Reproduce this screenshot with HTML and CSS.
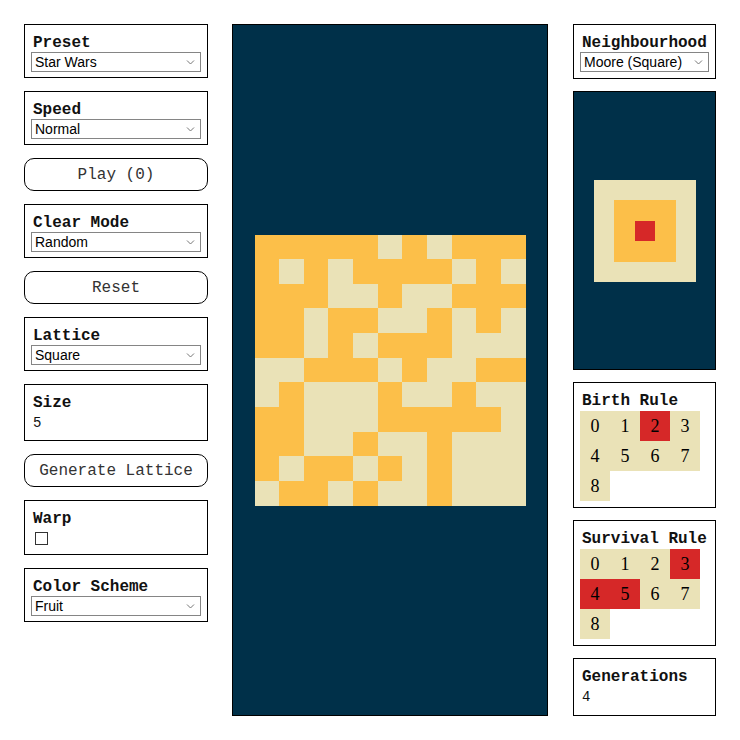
FILE: index.html
```html
<!DOCTYPE html>
<html>
<head>
<meta charset="utf-8">
<link rel="stylesheet" href="styles.css">
</head>
<body>
<div class="app">
  <div class="left">
    <div class="box">
      <div class="label">Preset</div>
      <div class="sel"><select><option>Star Wars</option></select><svg class="chev" width="9" height="5" viewBox="0 0 9 5"><path d="M1 0.5 L4.5 4 L8 0.5" /></svg></div>
    </div>
    <div class="box">
      <div class="label">Speed</div>
      <div class="sel"><select><option>Normal</option></select><svg class="chev" width="9" height="5" viewBox="0 0 9 5"><path d="M1 0.5 L4.5 4 L8 0.5" /></svg></div>
    </div>
    <button class="btn">Play (0)</button>
    <div class="box">
      <div class="label">Clear Mode</div>
      <div class="sel"><select><option>Random</option></select><svg class="chev" width="9" height="5" viewBox="0 0 9 5"><path d="M1 0.5 L4.5 4 L8 0.5" /></svg></div>
    </div>
    <button class="btn">Reset</button>
    <div class="box">
      <div class="label">Lattice</div>
      <div class="sel"><select><option>Square</option></select><svg class="chev" width="9" height="5" viewBox="0 0 9 5"><path d="M1 0.5 L4.5 4 L8 0.5" /></svg></div>
    </div>
    <div class="box">
      <div class="label">Size</div>
      <div class="value">5</div>
    </div>
    <button class="btn">Generate Lattice</button>
    <div class="box">
      <div class="label">Warp</div>
      <input type="checkbox" class="check">
    </div>
    <div class="box">
      <div class="label">Color Scheme</div>
      <div class="sel"><select><option>Fruit</option></select><svg class="chev" width="9" height="5" viewBox="0 0 9 5"><path d="M1 0.5 L4.5 4 L8 0.5" /></svg></div>
    </div>
  </div>

  <div class="center">
    <div class="grid">
      <span class="o"></span><span class="o"></span><span class="o"></span><span class="o"></span><span class="o"></span><span class="b"></span><span class="o"></span><span class="b"></span><span class="o"></span><span class="o"></span><span class="o"></span>
      <span class="o"></span><span class="b"></span><span class="o"></span><span class="b"></span><span class="o"></span><span class="o"></span><span class="o"></span><span class="o"></span><span class="b"></span><span class="o"></span><span class="b"></span>
      <span class="o"></span><span class="o"></span><span class="o"></span><span class="b"></span><span class="b"></span><span class="o"></span><span class="b"></span><span class="b"></span><span class="o"></span><span class="o"></span><span class="o"></span>
      <span class="o"></span><span class="o"></span><span class="b"></span><span class="o"></span><span class="o"></span><span class="b"></span><span class="b"></span><span class="o"></span><span class="b"></span><span class="o"></span><span class="b"></span>
      <span class="o"></span><span class="o"></span><span class="b"></span><span class="o"></span><span class="b"></span><span class="o"></span><span class="o"></span><span class="o"></span><span class="b"></span><span class="b"></span><span class="b"></span>
      <span class="b"></span><span class="b"></span><span class="o"></span><span class="o"></span><span class="o"></span><span class="b"></span><span class="o"></span><span class="b"></span><span class="b"></span><span class="o"></span><span class="o"></span>
      <span class="b"></span><span class="o"></span><span class="b"></span><span class="b"></span><span class="b"></span><span class="o"></span><span class="b"></span><span class="b"></span><span class="o"></span><span class="b"></span><span class="b"></span>
      <span class="o"></span><span class="o"></span><span class="b"></span><span class="b"></span><span class="b"></span><span class="o"></span><span class="o"></span><span class="o"></span><span class="o"></span><span class="o"></span><span class="b"></span>
      <span class="o"></span><span class="o"></span><span class="b"></span><span class="b"></span><span class="o"></span><span class="b"></span><span class="b"></span><span class="o"></span><span class="b"></span><span class="b"></span><span class="b"></span>
      <span class="o"></span><span class="b"></span><span class="o"></span><span class="o"></span><span class="b"></span><span class="o"></span><span class="b"></span><span class="o"></span><span class="b"></span><span class="b"></span><span class="b"></span>
      <span class="b"></span><span class="o"></span><span class="o"></span><span class="b"></span><span class="o"></span><span class="b"></span><span class="b"></span><span class="o"></span><span class="b"></span><span class="b"></span><span class="b"></span>
    </div>
  </div>

  <div class="right">
    <div class="box nbox">
      <div class="label">Neighbourhood</div>
      <div class="sel"><select><option>Moore (Square)</option></select><svg class="chev" width="9" height="5" viewBox="0 0 9 5"><path d="M1 0.5 L4.5 4 L8 0.5" /></svg></div>
    </div>
    <div class="npanel">
      <div class="ring1"><div class="ring2"><div class="core"></div></div></div>
    </div>
    <div class="box rulebox">
      <div class="label">Birth Rule</div>
      <div class="rules">
        <span>0</span><span>1</span><span class="on">2</span><span>3</span>
        <span>4</span><span>5</span><span>6</span><span>7</span>
        <span>8</span>
      </div>
    </div>
    <div class="box rulebox">
      <div class="label">Survival Rule</div>
      <div class="rules">
        <span>0</span><span>1</span><span>2</span><span class="on">3</span>
        <span class="on">4</span><span class="on">5</span><span>6</span><span>7</span>
        <span>8</span>
      </div>
    </div>
    <div class="box genbox">
      <div class="label">Generations</div>
      <div class="value">4</div>
    </div>
  </div>
</div>
</body>
</html>
```

FILE: styles.css
```css
html, body {
  margin: 0;
  padding: 0;
  background: #ffffff;
}

.app {
  display: flex;
  align-items: stretch;
  padding: 24px;
  font-family: "Liberation Mono", "Courier New", monospace;
  color: #111;
}

.left {
  width: 184px;
  display: flex;
  flex-direction: column;
  gap: 13px;
  flex-shrink: 0;
}

.center {
  width: 316px;
  margin-left: 24px;
  box-sizing: border-box;
  background: #003049;
  border: 1px solid #000;
  display: flex;
  align-items: center;
  justify-content: center;
  flex-shrink: 0;
}

.right {
  width: 143px;
  margin-left: 25px;
  display: flex;
  flex-direction: column;
  gap: 12px;
  flex-shrink: 0;
}

.box {
  box-sizing: border-box;
  border: 1px solid #000;
  padding: 9px 6px 5px 6px;
  background: #fff;
}

.label {
  font-family: "Liberation Mono", "Courier New", monospace;
  font-weight: bold;
  font-size: 16px;
  line-height: 18px;
  height: 18px;
  padding-left: 2px;
  white-space: nowrap;
}

.sel {
  position: relative;
  height: 20px;
}

.sel select {
  appearance: none;
  -webkit-appearance: none;
  display: block;
  width: 100%;
  height: 20px;
  box-sizing: border-box;
  border: 1px solid #858585;
  border-radius: 0;
  background: #fff;
  color: #000;
  font-family: "Liberation Sans", Arial, sans-serif;
  font-size: 14px;
  padding: 1px 0 0 3px;
  margin: 0;
  line-height: 17px;
}

.chev {
  position: absolute;
  right: 6px;
  top: 8px;
  pointer-events: none;
}

.chev path {
  fill: none;
  stroke: #777;
  stroke-width: 1;
}

.btn {
  display: block;
  width: 100%;
  height: 33px;
  box-sizing: border-box;
  border: 1px solid #000;
  border-radius: 10px;
  background: #fff;
  color: #333;
  font-family: "Liberation Mono", "Courier New", monospace;
  font-size: 16px;
  padding: 0;
  margin: 0;
}

.value {
  font-family: "Liberation Mono", "Courier New", monospace;
  font-size: 14px;
  height: 23px;
  line-height: 23px;
  padding-left: 2px;
}

.check {
  appearance: none;
  -webkit-appearance: none;
  display: block;
  width: 13px;
  height: 13px;
  box-sizing: border-box;
  border: 1px solid #333;
  border-radius: 0;
  background: #fff;
  margin: 4px 0 4px 4px;
}

.grid {
  width: 271px;
  height: 271px;
  display: grid;
  grid-template-columns: repeat(11, 1fr);
  grid-template-rows: repeat(11, 1fr);
}

.grid .o { background: #fcbf49; }
.grid .b { background: #eae2b7; }

.nbox {
  height: 55px;
}

.npanel {
  height: 279px;
  box-sizing: border-box;
  background: #003049;
  border: 1px solid #000;
  display: flex;
  align-items: center;
  justify-content: center;
}

.ring1 {
  width: 102px;
  height: 102px;
  background: #eae2b7;
  display: flex;
  align-items: center;
  justify-content: center;
}

.ring2 {
  width: 62px;
  height: 62px;
  background: #fcbf49;
  display: flex;
  align-items: center;
  justify-content: center;
}

.core {
  width: 20px;
  height: 20px;
  background: #d62828;
}

.rulebox {
  height: 126px;
}

.rules {
  margin-top: 1px;
  display: grid;
  grid-template-columns: repeat(4, 30px);
  grid-auto-rows: 30px;
}

.rules span {
  background: #eae2b7;
  font-family: "Liberation Serif", "Times New Roman", serif;
  font-size: 18px;
  color: #000;
  display: flex;
  align-items: center;
  justify-content: center;
}

.rules span.on {
  background: #d62828;
}

.genbox {
  height: 58px;
}
```
